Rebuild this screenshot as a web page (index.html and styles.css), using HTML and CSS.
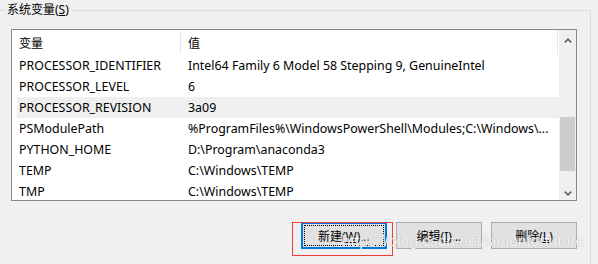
FILE: index.html
```html
<!DOCTYPE html>
<html lang="zh-CN">
<head>
  <meta charset="UTF-8" />
  <title>系统变量</title>
  <link rel="stylesheet" href="styles.css">
</head>
<body>

  <fieldset class="group">
    <legend>系统变量(<u>S</u>)</legend>

    <div class="listbox">
      <div class="list">
        <div class="list-head">
          <div class="col-name">变量</div>
          <div class="col-sep"></div>
          <div class="col-value">值</div>
        </div>
        <div class="row">
          <div class="col-name">PROCESSOR_IDENTIFIER</div>
          <div class="col-value">Intel64 Family 6 Model 58 Stepping 9, GenuineIntel</div>
        </div>
        <div class="row">
          <div class="col-name">PROCESSOR_LEVEL</div>
          <div class="col-value">6</div>
        </div>
        <div class="row selected">
          <div class="col-name">PROCESSOR_REVISION</div>
          <div class="col-value">3a09</div>
        </div>
        <div class="row">
          <div class="col-name">PSModulePath</div>
          <div class="col-value">%ProgramFiles%\WindowsPowerShell\Modules;C:\Windows\...</div>
        </div>
        <div class="row">
          <div class="col-name">PYTHON_HOME</div>
          <div class="col-value">D:\Program\anaconda3</div>
        </div>
        <div class="row">
          <div class="col-name">TEMP</div>
          <div class="col-value">C:\Windows\TEMP</div>
        </div>
        <div class="row">
          <div class="col-name">TMP</div>
          <div class="col-value">C:\Windows\TEMP</div>
        </div>
      </div>

      <div class="scrollbar">
        <div class="arrow arrow-up">
          <svg width="8" height="5" viewBox="0 0 8 5"><polyline points="0.8,4.4 4,1.2 7.2,4.4" fill="none" stroke="#606060" stroke-width="1.6"/></svg>
        </div>
        <div class="track"><div class="thumb"></div></div>
        <div class="arrow arrow-down">
          <svg width="8" height="5" viewBox="0 0 8 5"><polyline points="0.8,0.6 4,3.8 7.2,0.6" fill="none" stroke="#606060" stroke-width="1.6"/></svg>
        </div>
      </div>
    </div>

    <div class="buttons">
      <button class="btn default"><span>新建(<u>W</u>)...</span></button>
      <button class="btn">编辑(<u>I</u>)...</button>
      <button class="btn">删除(<u>L</u>)</button>
    </div>
  </fieldset>

  <div class="mark"></div>
  <div class="watermark">https://blog.csdn.net/simonforfuture</div>

</body>
</html>
```

FILE: styles.css
```css
* {margin: 0; padding: 0; box-sizing: border-box;}
body {
  font-family: "Noto Sans", "Noto Sans CJK SC", sans-serif;
  font-size: 12px;
  color: #000;
  background: #f0f0f0;
  width: 598px;
  height: 264px;
  overflow: hidden;
  position: relative;
}

.group {
  margin: 2px 7px 0 -2px;
  height: 263px;
  border: 1px solid #dcdcdc;
  padding: 0;
}
.group legend {
  margin-left: 6px;
  padding: 0 2px;
  line-height: 16px;
}

.listbox {
  margin: 11px 0 0 12px;
  width: 566px;
  height: 172px;
  border: 1px solid #828790;
  background: #fff;
  display: flex;
}

.list {
  width: 548px;
  overflow: hidden;
}

.list-head {
  height: 25px;
  display: flex;
  align-items: center;
  border-right: 1px solid #e5e5e5;
  margin-right: 1px;
}
.list-head .col-name {
  width: 168px;
  padding-left: 7px;
}
.list-head .col-sep {
  width: 1px;
  height: 23px;
  background: #e5e5e5;
}
.list-head .col-value {
  padding-left: 7px;
}

.row {
  height: 21px;
  margin-left: 5px;
  display: flex;
  align-items: center;
  white-space: nowrap;
  font-size: 12.4px;
}
.row.selected {
  background: #efefef;
}
.row .col-name {
  width: 163px;
  padding-left: 2px;
}
.row .col-value {
  padding-left: 8px;
  overflow: hidden;
}

.scrollbar {
  width: 17px;
  background: #f0f0f0;
  display: flex;
  flex-direction: column;
}
.arrow {
  display: flex;
  align-items: center;
  justify-content: center;
}
.arrow-up {
  height: 20px;
}
.arrow-down {
  height: 14px;
}
.track {
  flex: 1;
}
.thumb {
  margin: 67px 1px 0 1px;
  height: 54px;
  background: #cdcdcd;
}

.buttons {
  margin: 21px 0 0 0;
  width: 578px;
  display: flex;
  justify-content: flex-end;
  gap: 9px;
}
.btn {
  width: 86px;
  height: 27px;
  font-family: "Noto Sans", "Noto Sans CJK SC", sans-serif;
  font-size: 12px;
  color: #000;
  background: #e1e1e1;
  border: 1px solid #adadad;
}
.btn.default {
  border-color: #0078d7;
  box-shadow: inset 0 0 0 1px #0078d7;
  outline: 1px dotted #000;
  outline-offset: -4px;
}

/* red annotation frame */
.mark {
  position: absolute;
  left: 292px;
  top: 222px;
  width: 101px;
  height: 34px;
  border: 1px solid #ee3b3b;
}

.watermark {
  position: absolute;
  left: 342px;
  top: 232px;
  font-family: "Liberation Sans", sans-serif;
  font-size: 15.5px;
  color: rgba(255, 255, 255, 0.9);
  text-shadow: 0 0 1px rgba(110, 110, 110, 0.55);
  white-space: nowrap;
}
```
